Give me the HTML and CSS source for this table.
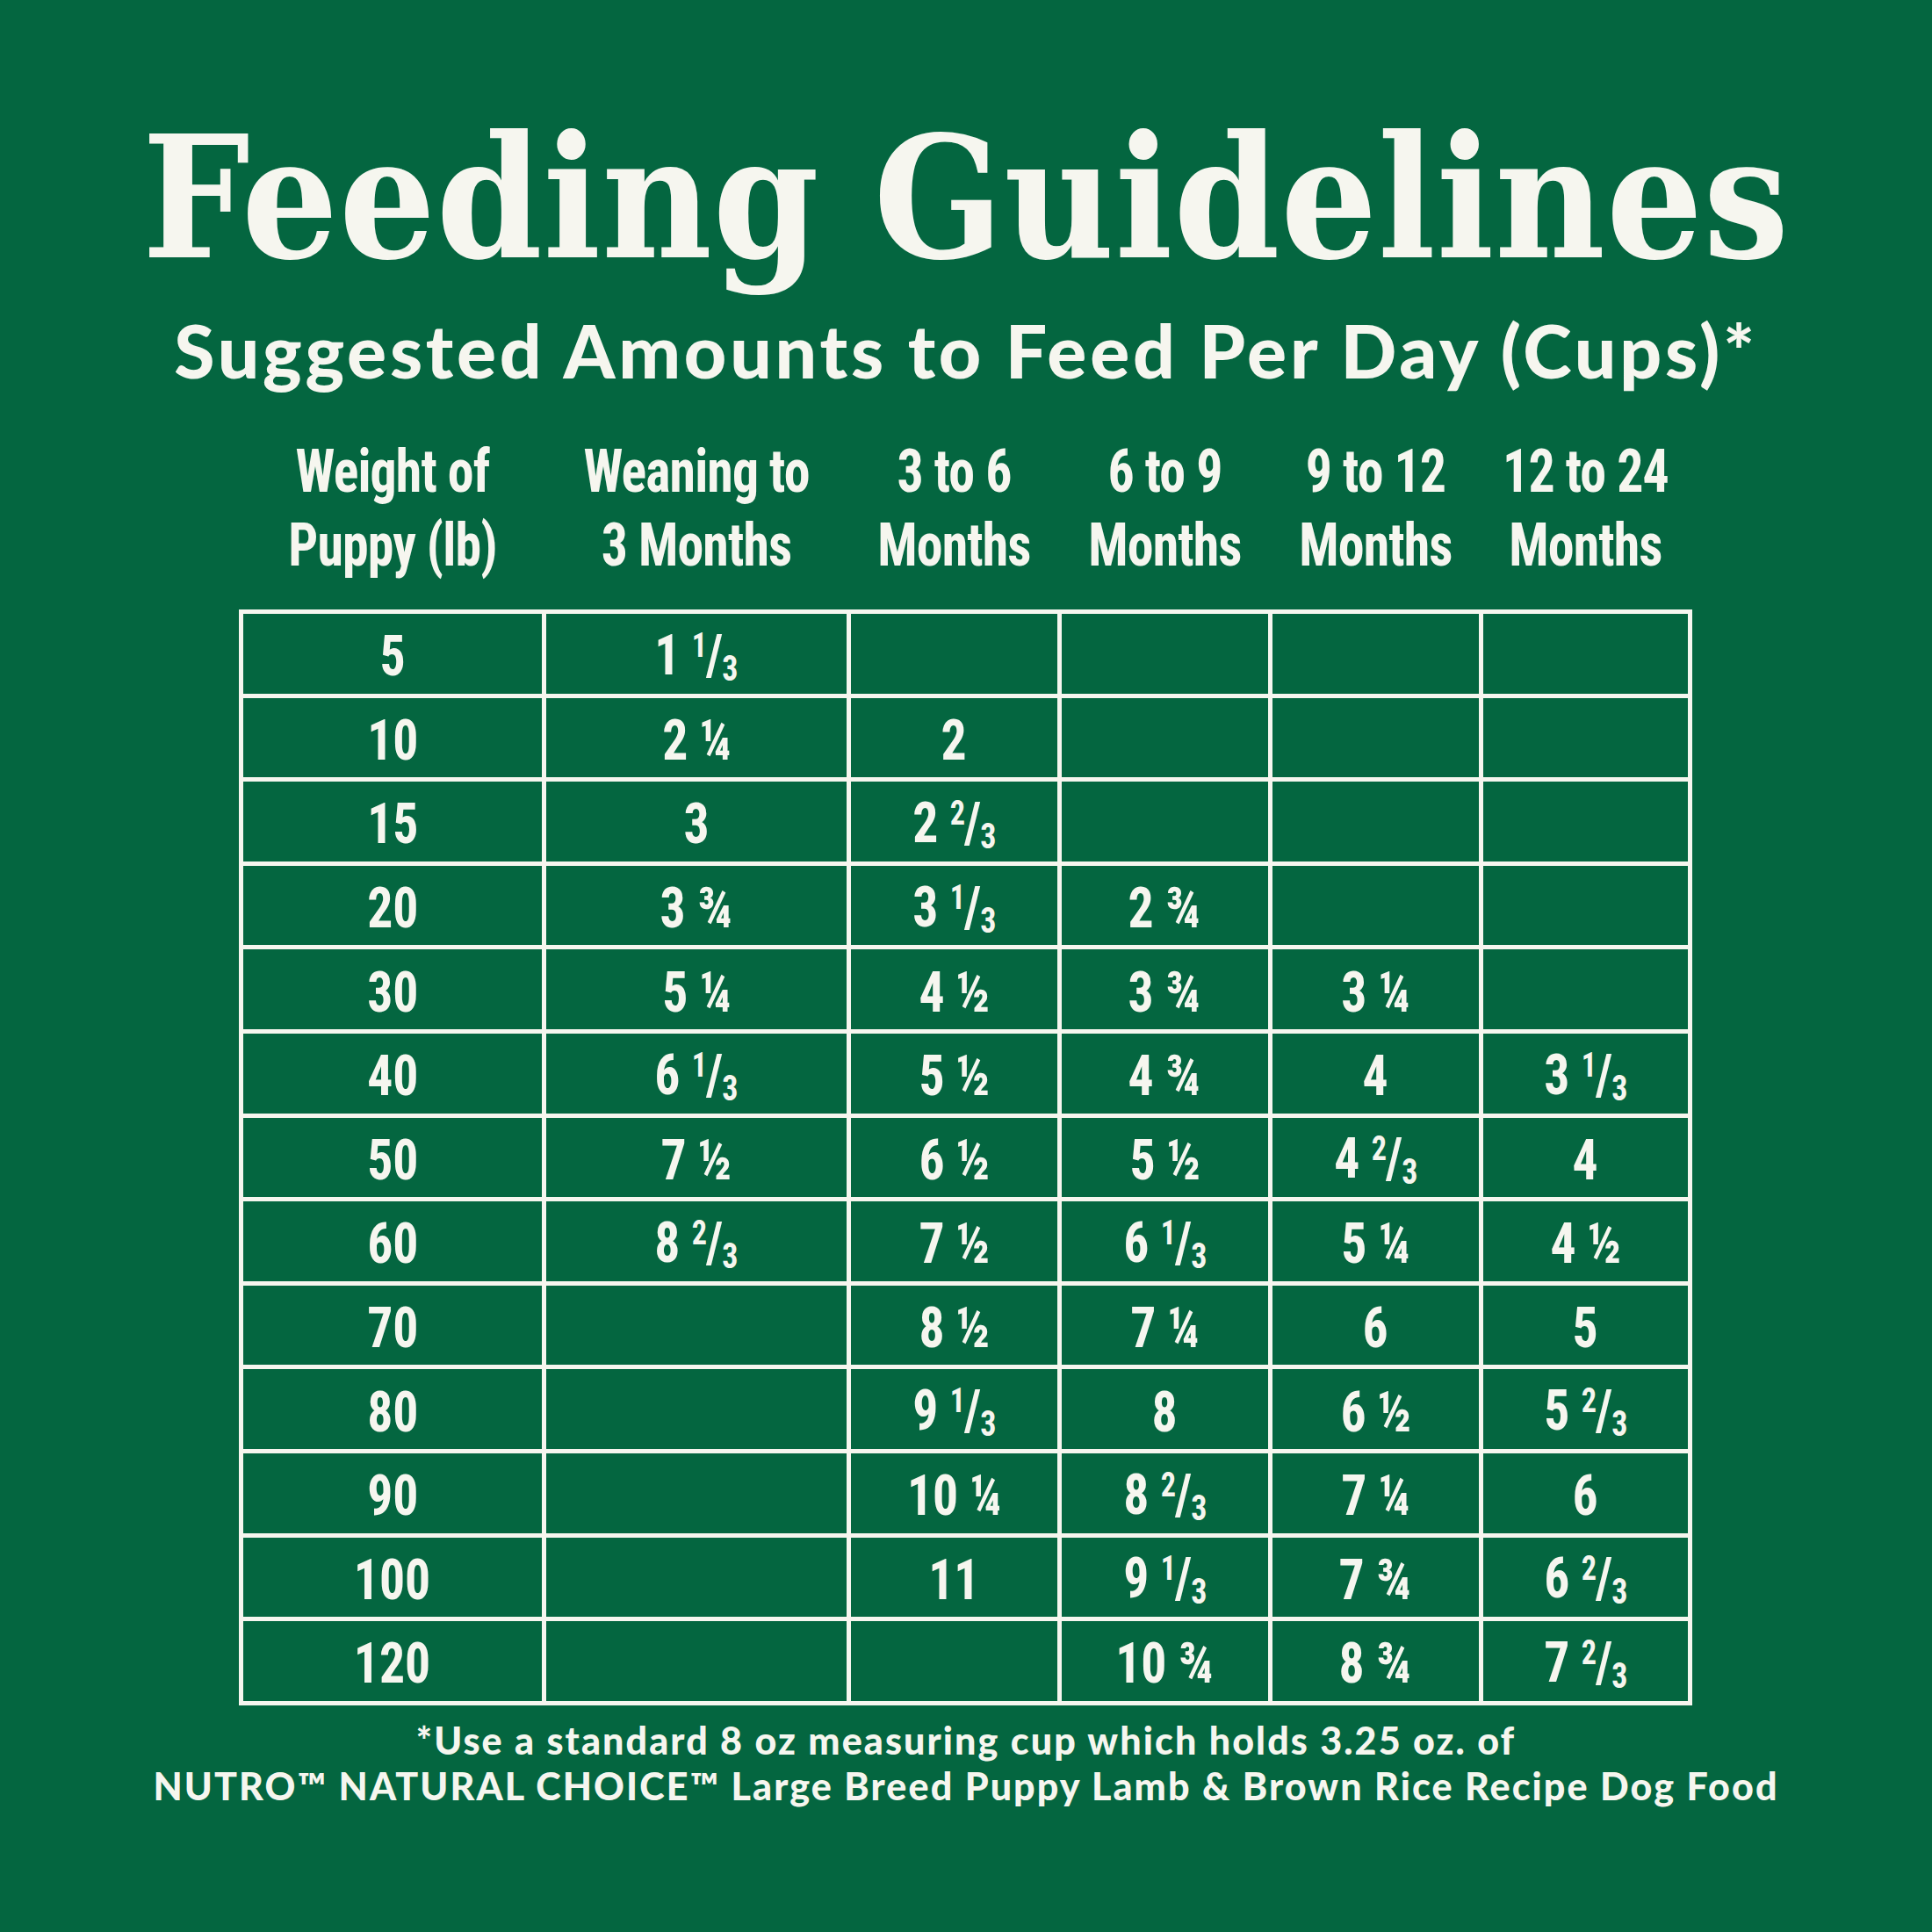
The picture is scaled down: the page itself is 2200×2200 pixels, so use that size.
FILE: index.html
```html
<!DOCTYPE html>
<html lang="en">
<head>
<meta charset="utf-8">
<title>Feeding Guidelines</title>
<link rel="stylesheet" href="styles.css">
</head>
<body>
<main class="page">
  <h1 class="title">Feeding Guidelines</h1>
  <p class="subtitle">Suggested Amounts to Feed Per Day (Cups)*</p>

  <div class="heads">
    <div class="head">Weight of<br>Puppy (lb)</div>
    <div class="head">Weaning to<br>3 Months</div>
    <div class="head">3 to 6<br>Months</div>
    <div class="head">6 to 9<br>Months</div>
    <div class="head">9 to 12<br>Months</div>
    <div class="head">12 to 24<br>Months</div>
  </div>

  <div class="grid">
    <div class="cell"><span class="v">5</span></div><div class="cell"><span class="v">1 <span class="num">1</span><span class="sl">/</span><span class="den">3</span></span></div><div class="cell"></div><div class="cell"></div><div class="cell"></div><div class="cell"></div>
    <div class="cell"><span class="v">10</span></div><div class="cell"><span class="v">2 ¼</span></div><div class="cell"><span class="v">2</span></div><div class="cell"></div><div class="cell"></div><div class="cell"></div>
    <div class="cell"><span class="v">15</span></div><div class="cell"><span class="v">3</span></div><div class="cell"><span class="v">2 <span class="num">2</span><span class="sl">/</span><span class="den">3</span></span></div><div class="cell"></div><div class="cell"></div><div class="cell"></div>
    <div class="cell"><span class="v">20</span></div><div class="cell"><span class="v">3 ¾</span></div><div class="cell"><span class="v">3 <span class="num">1</span><span class="sl">/</span><span class="den">3</span></span></div><div class="cell"><span class="v">2 ¾</span></div><div class="cell"></div><div class="cell"></div>
    <div class="cell"><span class="v">30</span></div><div class="cell"><span class="v">5 ¼</span></div><div class="cell"><span class="v">4 ½</span></div><div class="cell"><span class="v">3 ¾</span></div><div class="cell"><span class="v">3 ¼</span></div><div class="cell"></div>
    <div class="cell"><span class="v">40</span></div><div class="cell"><span class="v">6 <span class="num">1</span><span class="sl">/</span><span class="den">3</span></span></div><div class="cell"><span class="v">5 ½</span></div><div class="cell"><span class="v">4 ¾</span></div><div class="cell"><span class="v">4</span></div><div class="cell"><span class="v">3 <span class="num">1</span><span class="sl">/</span><span class="den">3</span></span></div>
    <div class="cell"><span class="v">50</span></div><div class="cell"><span class="v">7 ½</span></div><div class="cell"><span class="v">6 ½</span></div><div class="cell"><span class="v">5 ½</span></div><div class="cell"><span class="v">4 <span class="num">2</span><span class="sl">/</span><span class="den">3</span></span></div><div class="cell"><span class="v">4</span></div>
    <div class="cell"><span class="v">60</span></div><div class="cell"><span class="v">8 <span class="num">2</span><span class="sl">/</span><span class="den">3</span></span></div><div class="cell"><span class="v">7 ½</span></div><div class="cell"><span class="v">6 <span class="num">1</span><span class="sl">/</span><span class="den">3</span></span></div><div class="cell"><span class="v">5 ¼</span></div><div class="cell"><span class="v">4 ½</span></div>
    <div class="cell"><span class="v">70</span></div><div class="cell"></div><div class="cell"><span class="v">8 ½</span></div><div class="cell"><span class="v">7 ¼</span></div><div class="cell"><span class="v">6</span></div><div class="cell"><span class="v">5</span></div>
    <div class="cell"><span class="v">80</span></div><div class="cell"></div><div class="cell"><span class="v">9 <span class="num">1</span><span class="sl">/</span><span class="den">3</span></span></div><div class="cell"><span class="v">8</span></div><div class="cell"><span class="v">6 ½</span></div><div class="cell"><span class="v">5 <span class="num">2</span><span class="sl">/</span><span class="den">3</span></span></div>
    <div class="cell"><span class="v">90</span></div><div class="cell"></div><div class="cell"><span class="v">10 ¼</span></div><div class="cell"><span class="v">8 <span class="num">2</span><span class="sl">/</span><span class="den">3</span></span></div><div class="cell"><span class="v">7 ¼</span></div><div class="cell"><span class="v">6</span></div>
    <div class="cell"><span class="v">100</span></div><div class="cell"></div><div class="cell"><span class="v">11</span></div><div class="cell"><span class="v">9 <span class="num">1</span><span class="sl">/</span><span class="den">3</span></span></div><div class="cell"><span class="v">7 ¾</span></div><div class="cell"><span class="v">6 <span class="num">2</span><span class="sl">/</span><span class="den">3</span></span></div>
    <div class="cell"><span class="v">120</span></div><div class="cell"></div><div class="cell"></div><div class="cell"><span class="v">10 ¾</span></div><div class="cell"><span class="v">8 ¾</span></div><div class="cell"><span class="v">7 <span class="num">2</span><span class="sl">/</span><span class="den">3</span></span></div>
  </div>

  <p class="foot">*Use a standard 8 oz measuring cup which holds 3.25 oz. of<br>NUTRO™ NATURAL CHOICE™ Large Breed Puppy Lamb &amp; Brown Rice Recipe Dog Food</p>
</main>
</body>
</html>
```

FILE: styles.css
```css
html, body {
  margin: 0;
  padding: 0;
  background: #046640;
}

.page {
  width: 2200px;
  height: 2200px;
  background: #046640;
  color: #f6f6ef;
  display: flex;
  flex-direction: column;
  align-items: center;
  overflow: hidden;
}

.title {
  margin: 130px 0 0;
  font-family: "DejaVu Serif Condensed", "DejaVu Serif", serif;
  font-weight: 700;
  font-size: 192px;
  line-height: 1;
  letter-spacing: 1px;
  white-space: nowrap;
}

.subtitle {
  margin: 35px 0 0;
  font-family: "Lato", "Noto Sans", sans-serif;
  font-weight: 900;
  font-size: 84px;
  line-height: 1;
  letter-spacing: 3.8px;
  white-space: nowrap;
}

.heads,
.grid {
  display: grid;
  grid-template-columns: 340px 342px 235px 235px 235px 233px;
  column-gap: 5px;
  padding: 0 5px;
  width: 1655px;
  box-sizing: border-box;
  margin-left: -1px;
}

.heads {
  margin-top: 54px;
}

.head {
  text-align: center;
  font-family: "Roboto Condensed", "Roboto", sans-serif;
  font-stretch: 75%;
  font-weight: 700;
  font-size: 68px;
  line-height: 84px;
  letter-spacing: -1px;
  white-space: nowrap;
  transform: scaleX(0.88);
}

.grid {
  margin-top: 31px;
  padding: 5px;
  row-gap: 5px;
  grid-auto-rows: 90.6px;
  background: #f6f6ef;
}

.cell {
  background: #046640;
  display: flex;
  align-items: center;
  justify-content: center;
  padding-top: 8px;
  box-sizing: border-box;
  font-family: "Roboto Condensed", "Roboto", sans-serif;
  font-stretch: 75%;
  font-weight: 700;
  font-size: 64px;
  line-height: 1;
  white-space: pre;
}

.v {
  display: inline-block;
  transform: scaleX(0.9);
}

.num {
  font-size: 38px;
  vertical-align: 20px;
}

.sl {
  margin: 0 -1px;
}

.den {
  font-size: 40px;
  vertical-align: -7px;
}

.foot {
  margin: 14px 0 0;
  text-align: center;
  font-family: "Lato", "Noto Sans", sans-serif;
  font-weight: 900;
  font-size: 43px;
  line-height: 52px;
  letter-spacing: 2.1px;
  white-space: nowrap;
}
```
